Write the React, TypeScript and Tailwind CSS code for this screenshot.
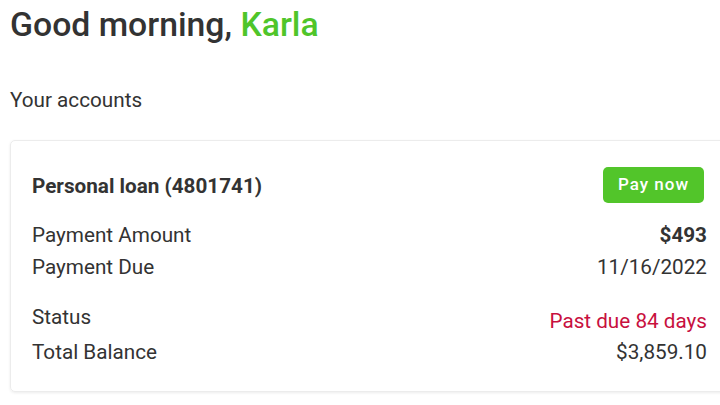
import React from "react";

export default function App() {
  const font = { fontFamily: "Roboto, 'Noto Sans', sans-serif" };
  return (
    <div className="w-[720px] h-[405px] overflow-hidden bg-white text-[#333333]" style={font}>
      <div className="pl-[10px] pt-[5px]">
        <h1 className="text-[33.75px] leading-[40px] font-medium">
          Good morning, <span className="text-[#4fc52a]">Karla</span>
        </h1>
        <div className="mt-[41px] text-[20.7px] leading-[28px]">Your accounts</div>
        <div className="mt-[26px] w-[719px] h-[252px] rounded-[5px] border border-[#ececec] shadow-[0_1px_3px_rgba(0,0,0,0.08)] px-[21px] pt-[26px]">
          <div className="flex items-center justify-between h-[36px]">
            <div className="text-[20.7px] font-bold leading-[28px] pt-[2px]">Personal loan (4801741)</div>
            <button className="mr-[3px] h-[36px] w-[101px] rounded-[5px] bg-[#52c52a] text-white text-[17px] font-medium tracking-[0.06em]">
              Pay now
            </button>
          </div>
          <div className="mt-[16px] flex justify-between text-[20.7px] leading-[32px]">
            <span>Payment Amount</span>
            <span className="font-bold">$493</span>
          </div>
          <div className="flex justify-between text-[20.7px] leading-[32px]">
            <span>Payment Due</span>
            <span>11/16/2022</span>
          </div>
          <div className="mt-[18px] flex justify-between text-[20.7px] leading-[32px]">
            <span>Status</span>
            <span className="text-[#c8103e] pt-[4px]">Past due 84 days</span>
          </div>
          <div className="mt-[-1px] flex justify-between text-[20.7px] leading-[32px]">
            <span>Total Balance</span>
            <span>$3,859.10</span>
          </div>
        </div>
      </div>
    </div>
  );
}
